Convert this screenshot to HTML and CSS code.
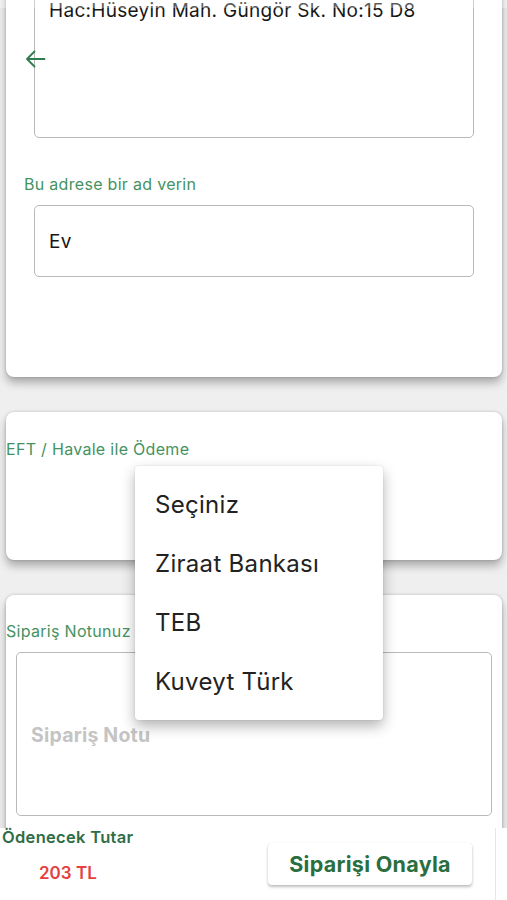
FILE: index.html
```html
<!DOCTYPE html>
<html lang="tr">
<head>
<meta charset="utf-8">
<title>Sipariş</title>
<link rel="stylesheet" href="styles.css">
</head>
<body>
<div class="screen">
  <div class="content">
    <section class="card card-address">
      <div class="box box-address">Hac:Hüseyin Mah. Güngör Sk. No:15 D8</div>
      <div class="label label-name">Bu adrese bir ad verin</div>
      <div class="box box-name">Ev</div>
    </section>
    <section class="card card-pay">
      <div class="label">EFT / Havale ile Ödeme</div>
    </section>
    <section class="card card-note">
      <div class="label">Sipariş Notunuz</div>
      <div class="box box-note"><span class="placeholder">Sipariş Notu</span></div>
    </section>
  </div>
  <footer class="footer">
    <div class="total">
      <div class="total-label">Ödenecek Tutar</div>
      <div class="total-value">203 TL</div>
    </div>
    <button class="confirm">Siparişi Onayla</button>
  </footer>

  <div class="topfade"></div>
  <div class="back">
    <svg width="21" height="18" viewBox="0 0 21 18" fill="none" stroke="#2e7d4f" stroke-width="1.8" stroke-linecap="round" stroke-linejoin="round">
      <path d="M19.5 9H2M9.5 1.5L2 9l7.5 7.5"/>
    </svg>
  </div>

  <ul class="menu">
    <li>Seçiniz</li>
    <li>Ziraat Bankası</li>
    <li>TEB</li>
    <li>Kuveyt Türk</li>
  </ul>
</div>
</body>
</html>
```

FILE: styles.css
```css
* { box-sizing: border-box; }
html, body { margin: 0; padding: 0; }
body {
  background: #efefef;
  font-family: Inter, "Liberation Sans", Arial, sans-serif;
  color: #111;
}
.screen {
  position: relative;
  width: 507px;
  height: 900px;
  overflow: hidden;
  display: flex;
  flex-direction: column;
}
.content {
  height: 828px;
  overflow: hidden;
  padding: 0 5px 0 6px;
  display: flex;
  flex-direction: column;
  gap: 35px;
}
.card {
  background: #fff;
  border-radius: 8px;
  box-shadow: 0 6px 9px rgba(0,0,0,0.28), 0 0 3px rgba(0,0,0,0.2);
  flex: none;
}
.card-address {
  margin-top: -40px;
  height: 417px;
  padding: 0 0 0 18px;
}
.box {
  border: 1px solid #b9b9b9;
  border-radius: 5px;
  background: #fff;
}
.box-address {
  margin-top: 10px;
  margin-left: 10px;
  width: 440px;
  height: 168px;
  padding: 29px 14px 0;
  font-size: 19px;
  letter-spacing: 0.3px;
  line-height: 22px;
  color: #161616;
}
.label {
  color: #45925f;
  font-size: 16px;
  letter-spacing: 0.3px;
  line-height: 18px;
}
.label-name {
  margin-top: 37px;
}
.box-name {
  margin-top: 12px;
  margin-left: 10px;
  width: 440px;
  height: 72px;
  padding: 0 14px;
  display: flex;
  align-items: center;
  font-size: 19px;
  letter-spacing: 0.3px;
  color: #161616;
}
.card-pay {
  height: 148px;
  padding-top: 28px;
}
.card-note {
  height: 260px;
  padding-top: 27px;
}
.box-note {
  margin: 12px 0 0 10px;
  width: 476px;
  height: 164px;
  padding: 70px 14px 0;
}
.placeholder {
  color: #c4c4c4;
  font-weight: bold;
  font-size: 19.5px;
  letter-spacing: 0.2px;
}
.footer {
  flex: 1;
  width: 507px;
  background: linear-gradient(to right, #fff 495px, #e6e6e6 495px, #e6e6e6 496px, #fff 496px);
  display: flex;
  justify-content: space-between;
  align-items: flex-start;
  padding: 0 35px 0 2px;
}
.total-label {
  color: #2f6d46;
  font-weight: 600;
  font-size: 16.5px;
  letter-spacing: 0.3px;
  line-height: 18px;
}
.total-value {
  color: #e53f3f;
  font-weight: 600;
  font-size: 17px;
  margin-top: 17px;
  margin-left: 37px;
}
.confirm {
  margin-top: 15px;
  width: 204px;
  height: 42px;
  border: none;
  border-radius: 4px;
  background: #fff;
  box-shadow: 0 2px 3px rgba(0,0,0,0.25), 0 0 1px rgba(0,0,0,0.15);
  color: #2a6e40;
  font-family: Inter, "Liberation Sans", Arial, sans-serif;
  font-weight: bold;
  font-size: 21.5px;
  letter-spacing: 0.3px;
  padding: 0;
}
.topfade {
  position: absolute;
  left: 0; top: 0;
  width: 507px;
  height: 8px;
  background: rgba(255,255,255,0.3);
}
.back {
  position: absolute;
  left: 25px;
  top: 50px;
  line-height: 0;
}
.menu {
  position: absolute;
  left: 135px;
  top: 466px;
  width: 248px;
  margin: 0;
  padding: 9px 0;
  list-style: none;
  background: #fff;
  border-radius: 4px;
  box-shadow: 0 6px 14px rgba(0,0,0,0.3), 0 0 2px rgba(0,0,0,0.12);
}
.menu li {
  height: 59px;
  display: flex;
  align-items: center;
  padding-left: 20px;
  font-size: 24px;
  letter-spacing: 0.3px;
  color: #222;
}
```
